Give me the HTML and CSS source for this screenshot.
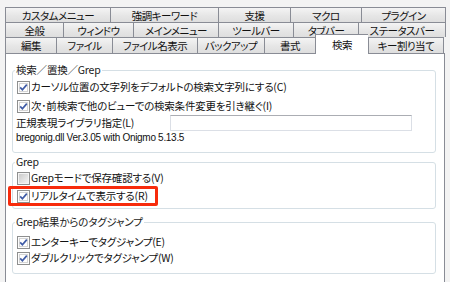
FILE: index.html
```html
<!DOCTYPE html>
<html lang="ja">
<head>
<meta charset="utf-8">
<title>設定</title>
<link rel="stylesheet" href="styles.css">
</head>
<body>
<div class="dialog">
  <div class="tabs">
    <div class="tab-row row1">
      <div class="tab">カスタムメニュー</div>
      <div class="tab">強調キーワード</div>
      <div class="tab">支援</div>
      <div class="tab">マクロ</div>
      <div class="tab last">プラグイン</div>
    </div>
    <div class="tab-row row2">
      <div class="tab">全般</div>
      <div class="tab">ウィンドウ</div>
      <div class="tab">メインメニュー</div>
      <div class="tab">ツールバー</div>
      <div class="tab">タブバー</div>
      <div class="tab last">ステータスバー</div>
    </div>
    <div class="tab-row row3">
      <div class="tab">編集</div>
      <div class="tab">ファイル</div>
      <div class="tab">ファイル名表示</div>
      <div class="tab">バックアップ</div>
      <div class="tab">書式</div>
      <div class="tab selected">検索</div>
      <div class="tab last">キー割り当て</div>
    </div>
  </div>
  <div class="panel">
    <div class="group g1">
      <div class="legend">検索／置換／Grep</div>
      <div class="row r18">
        <span class="box checked"><svg width="13" height="13" viewBox="0 0 13 13"><rect x="0.5" y="0.5" width="12" height="12" fill="#fdfdfd" stroke="#8e8f8f"/><rect x="2.5" y="2.5" width="8" height="8" fill="#ffffff" stroke="#d4d4d4"/><path d="M3.2 6.4 L5.4 8.8 L9.8 3.6" fill="none" stroke="#3f5ba6" stroke-width="1.7"/></svg></span>
        <span class="text">カーソル位置の文字列をデフォルトの検索文字列にする(C)</span>
      </div>
      <div class="row r18 gap1">
        <span class="box checked"><svg width="13" height="13" viewBox="0 0 13 13"><rect x="0.5" y="0.5" width="12" height="12" fill="#fdfdfd" stroke="#8e8f8f"/><rect x="2.5" y="2.5" width="8" height="8" fill="#ffffff" stroke="#d4d4d4"/><path d="M3.2 6.4 L5.4 8.8 L9.8 3.6" fill="none" stroke="#3f5ba6" stroke-width="1.7"/></svg></span>
        <span class="text">次･前検索で他のビューでの検索条件変更を引き継ぐ(I)</span>
      </div>
      <div class="row r16 lib">
        <span class="text">正規表現ライブラリ指定(L)</span>
        <span class="input"></span>
      </div>
      <div class="row r14 ver">
        <span class="text">bregonig.dll Ver.3.05 with Onigmo 5.13.5</span>
      </div>
    </div>
    <div class="group g2">
      <div class="legend">Grep</div>
      <div class="row r18">
        <span class="box"><svg width="13" height="13" viewBox="0 0 13 13"><defs><linearGradient id="ug" x1="0" y1="0" x2="1" y2="1"><stop offset="0" stop-color="#cbcbcb"/><stop offset="1" stop-color="#f3f3f3"/></linearGradient></defs><rect x="0.5" y="0.5" width="12" height="12" fill="#f4f4f4" stroke="#8e8f8f"/><rect x="2" y="2" width="9" height="9" fill="url(#ug)"/></svg></span>
        <span class="text">Grepモードで保存確認する(V)</span>
      </div>
      <div class="row r18 marked">
        <span class="box checked"><svg width="13" height="13" viewBox="0 0 13 13"><rect x="0.5" y="0.5" width="12" height="12" fill="#fdfdfd" stroke="#8e8f8f"/><rect x="2.5" y="2.5" width="8" height="8" fill="#ffffff" stroke="#d4d4d4"/><path d="M3.2 6.4 L5.4 8.8 L9.8 3.6" fill="none" stroke="#3f5ba6" stroke-width="1.7"/></svg></span>
        <span class="text">リアルタイムで表示する(R)</span>
        <span class="highlight"></span>
      </div>
    </div>
    <div class="group g3">
      <div class="legend">Grep結果からのタグジャンプ</div>
      <div class="row r16">
        <span class="box checked"><svg width="13" height="13" viewBox="0 0 13 13"><rect x="0.5" y="0.5" width="12" height="12" fill="#fdfdfd" stroke="#8e8f8f"/><rect x="2.5" y="2.5" width="8" height="8" fill="#ffffff" stroke="#d4d4d4"/><path d="M3.2 6.4 L5.4 8.8 L9.8 3.6" fill="none" stroke="#3f5ba6" stroke-width="1.7"/></svg></span>
        <span class="text">エンターキーでタグジャンプ(E)</span>
      </div>
      <div class="row r16">
        <span class="box checked"><svg width="13" height="13" viewBox="0 0 13 13"><rect x="0.5" y="0.5" width="12" height="12" fill="#fdfdfd" stroke="#8e8f8f"/><rect x="2.5" y="2.5" width="8" height="8" fill="#ffffff" stroke="#d4d4d4"/><path d="M3.2 6.4 L5.4 8.8 L9.8 3.6" fill="none" stroke="#3f5ba6" stroke-width="1.7"/></svg></span>
        <span class="text">ダブルクリックでタグジャンプ(W)</span>
      </div>
    </div>
  </div>
</div>
</body>
</html>
```

FILE: styles.css
```css
* { box-sizing: border-box; }

html, body {
  margin: 0;
  padding: 0;
  width: 450px;
  height: 282px;
  overflow: hidden;
  background: #f3f3f3;
}

body {
  font-family: "Noto Sans CJK JP", "Noto Sans", sans-serif;
  font-feature-settings: "palt";
  font-size: 10.5px;
  letter-spacing: -0.2px;
  color: #111;
}

.dialog {
  padding: 7px 0 0 5px;
}

.tabs {
  display: flex;
  flex-direction: column;
}

.tab-row {
  display: flex;
  height: 15px;
}

.tab-row.row3 {
  height: 16px;
}

.tab {
  height: 100%;
  border-top: 1px solid #898c95;
  border-left: 1px solid #898c95;
  background: linear-gradient(#f4f4f4, #e6e6e6 55%, #dedede);
  display: flex;
  align-items: center;
  justify-content: center;
  font-size: 10.5px;
  letter-spacing: -0.5px;
  line-height: 13px;
  color: #111;
  white-space: nowrap;
}

.tab.last {
  border-right: 1px solid #898c95;
}

.row1 .tab:nth-child(1) { width: 105px; }
.row1 .tab:nth-child(2) { width: 108px; }
.row1 .tab:nth-child(3) { width: 72px; }
.row1 .tab:nth-child(4) { width: 71px; }
.row1 .tab:nth-child(5) { width: 85px; }

.row2 .tab:nth-child(1) { width: 58px; }
.row2 .tab:nth-child(2) { width: 70px; }
.row2 .tab:nth-child(3) { width: 85px; }
.row2 .tab:nth-child(4) { width: 75px; }
.row2 .tab:nth-child(5) { width: 65px; }
.row2 .tab:nth-child(6) { width: 88px; }

.row3 .tab:nth-child(1) { width: 51px; }
.row3 .tab:nth-child(2) { width: 56px; }
.row3 .tab:nth-child(3) { width: 85px; }
.row3 .tab:nth-child(4) { width: 67px; }
.row3 .tab:nth-child(5) { width: 51px; }
.row3 .tab:nth-child(6) { width: 53px; }
.row3 .tab:nth-child(7) { width: 76px; }

.tab.selected {
  position: relative;
  z-index: 1;
  height: 20px;
  margin-top: -3px;
  background: #fff;
  align-items: flex-start;
  padding-top: 3px;
}

.panel {
  width: 440px;
  height: 240px;
  background: #fff;
  border: 1px solid #898c95;
  padding: 16px 8px 0 6px;
}

.group {
  position: relative;
  border: 1px solid #d5dfe5;
  border-radius: 3px;
  padding-left: 4px;
}

.g1 { height: 83px; padding-top: 7px; }
.g2 { height: 47px; margin-top: 9px; padding-top: 6px; }
.g3 { height: 52px; margin-top: 13px; padding-top: 11px; }

.legend {
  position: absolute;
  top: -8px;
  left: 2px;
  height: 14px;
  line-height: 14px;
  padding: 0 1px;
  background: #fff;
  color: #1a1a1a;
  white-space: nowrap;
}

.row {
  position: relative;
  display: flex;
  align-items: center;
  white-space: nowrap;
}

.r18 { height: 18px; }
.r16 { height: 16px; }
.r14 { height: 14px; }
.gap1 { margin-top: 1px; }

.box {
  width: 13px;
  height: 13px;
  flex: none;
  margin-right: 1px;
}

.box svg { display: block; }

.text {
  line-height: 14px;
}

.lib {
  margin-left: -1px;
}

.lib .text {
  width: 154px;
}

.input {
  width: 242px;
  height: 16px;
  border: 1px solid #dbdfe6;
  border-top-color: #abadb3;
  background: #fff;
}

.ver {
  margin-left: -1px;
  font-family: "Liberation Sans", Arial, sans-serif;
  font-size: 10px;
  letter-spacing: -0.3px;
}

.highlight {
  position: absolute;
  left: -9px;
  top: -1px;
  width: 150px;
  height: 20px;
  border: 3px solid #f72b0c;
  border-radius: 2px;
  pointer-events: none;
}
```
